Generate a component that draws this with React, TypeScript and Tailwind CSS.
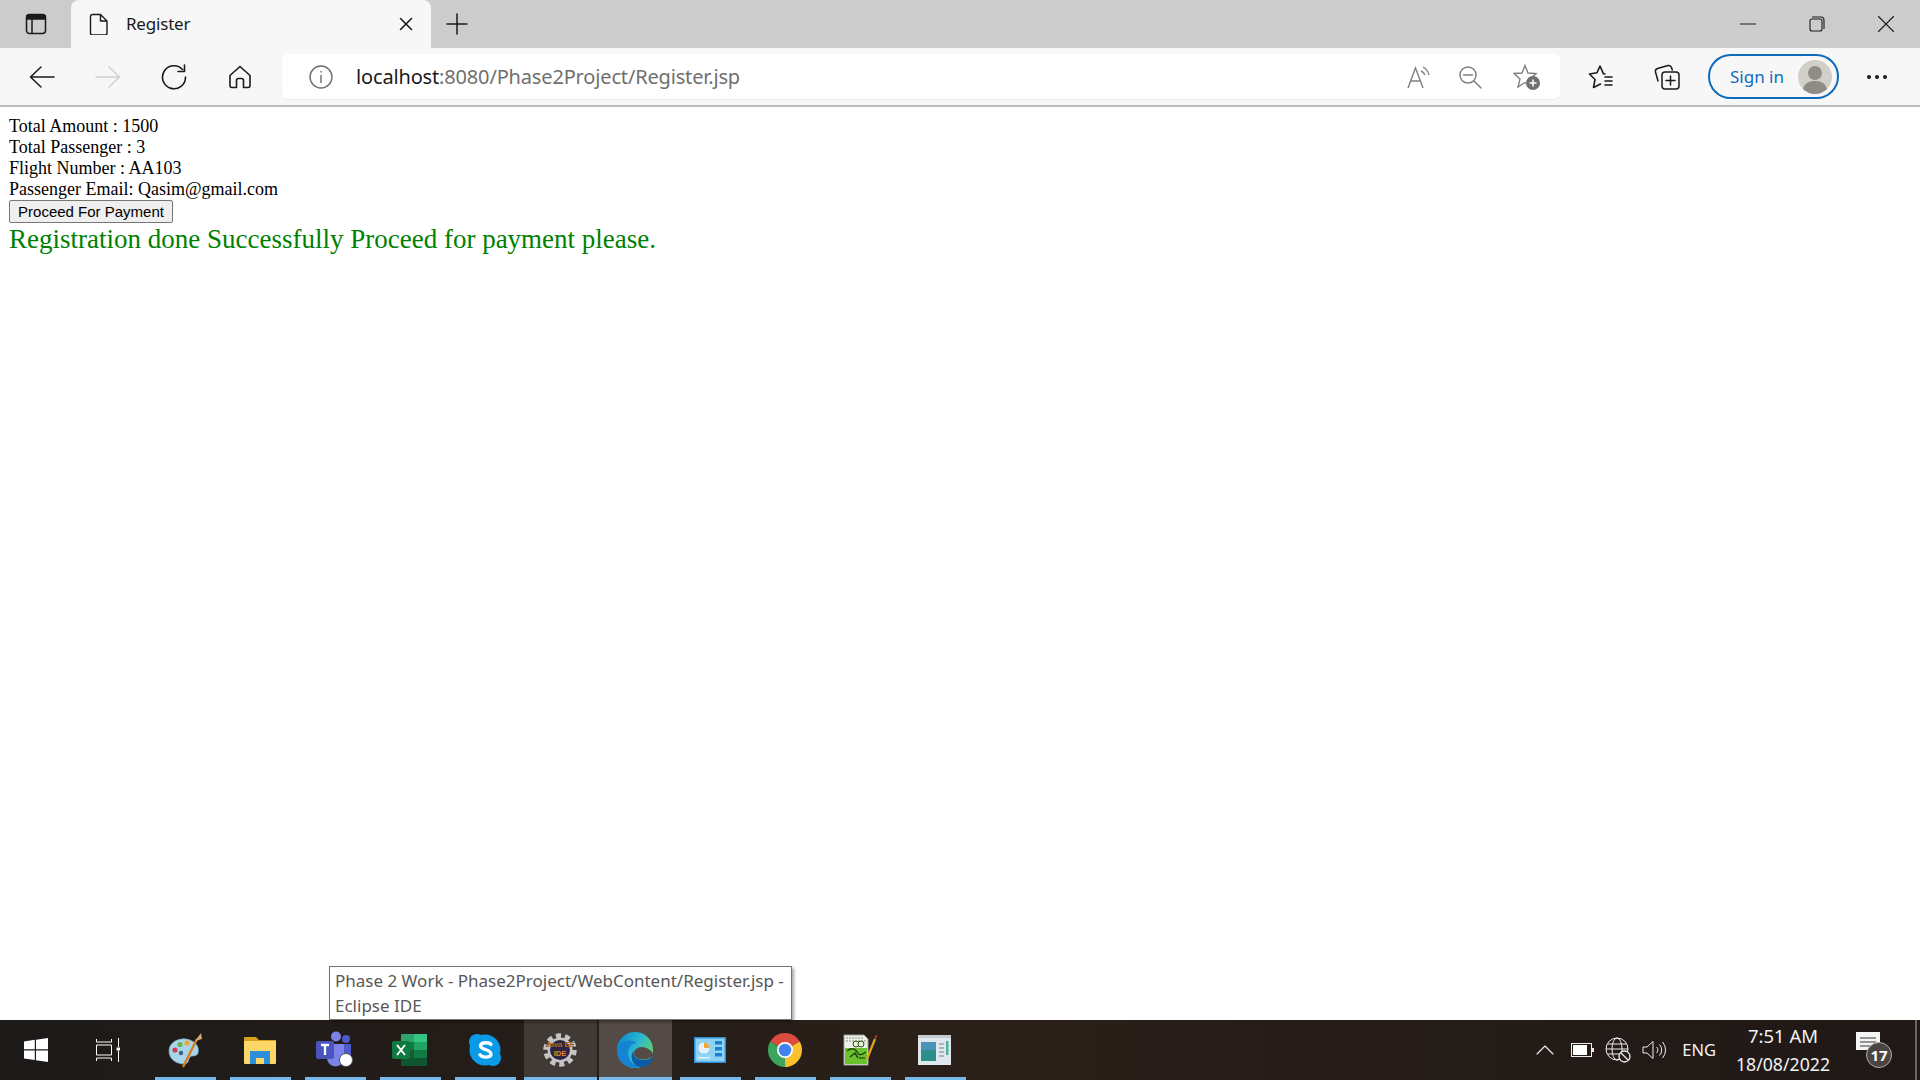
import React from "react";

const Sv = ({ s = 24, children, c = "#1a1a1a", w = 1.5, className = "" }: any) => (
  <svg width={s} height={s} viewBox={`0 0 ${s} ${s}`} fill="none" stroke={c} strokeWidth={w} strokeLinecap="round" strokeLinejoin="round" className={className}>
    {children}
  </svg>
);

const Tool = ({ children, w = "w-[66px]" }: any) => <div className={`${w} h-full flex items-center justify-center shrink-0`}>{children}</div>;

const Back = ({ c = "#1a1a1a" }: any) => (
  <Sv c={c} s={26}><path d="M1.5 13H25M12 3L1.5 13l10.5 10" /></Sv>
);
const Forward = () => (
  <Sv c="#d0d0d0" s={26}><path d="M1 13h23.5M14 3l10.5 10L14 23" /></Sv>
);

const Palette = () => (
  <svg width="38" height="36" viewBox="0 0 38 36">
    <path d="M3 19C3 10 13 6 20 7c8 1 14 7 12 14-1 4-6 2-8 4-2 3-1 7-6 7C10 32 3 27 3 19z" fill="#a9d5ea" stroke="#7ba9c2" strokeWidth="0.7" />
    <circle cx="9" cy="18" r="2.6" fill="#c8434b" />
    <circle cx="14" cy="12.5" r="2.6" fill="#69b34c" />
    <circle cx="21" cy="11" r="2.6" fill="#eaa83a" />
    <circle cx="15" cy="21" r="2.2" fill="#41607a" />
    <path d="M17 35L31 7" stroke="#d97c1e" strokeWidth="2.4" />
    <path d="M29 9l6-8 1 6z" fill="#d6a873" />
  </svg>
);
const Folder = () => (
  <svg width="34" height="28" viewBox="0 0 34 28">
    <path d="M1 2a1 1 0 011-1h11l3 3h17v4H1z" fill="#d8a11b" />
    <path d="M1 5h32v22a1 1 0 01-1 1H2a1 1 0 01-1-1z" fill="#fcd667" />
    <path d="M7 15h20v13h-6v-6h-8v6H7z" fill="#2b8fdc" />
  </svg>
);
const Teams = () => (
  <svg width="38" height="38" viewBox="0 0 38 38">
    <circle cx="20" cy="5.5" r="5" fill="#7b83eb" />
    <circle cx="30" cy="8" r="4" fill="#5059c9" />
    <path d="M24 13h11v11a5 5 0 01-5 5h-6z" fill="#5059c9" />
    <path d="M11 13h17v14a8 8 0 01-17 0z" fill="#7b83eb" />
    <rect x="0" y="10" width="18" height="18" rx="2" fill="#4b53bc" />
    <path d="M5 14h8M9 14v10" stroke="#fff" strokeWidth="2.3" />
    <circle cx="30" cy="29" r="6.5" fill="#fff" stroke="#555" strokeWidth="1" />
  </svg>
);
const Excel = () => (
  <svg width="36" height="32" viewBox="0 0 36 32">
    <path d="M9 1a1 1 0 011-1h24a1 1 0 011 1v7H9z" fill="#2fa36b" />
    <path d="M22 0h12a1 1 0 011 1v7H22z" fill="#33c481" />
    <rect x="9" y="8" width="26" height="8" fill="#107c41" />
    <rect x="22" y="8" width="13" height="8" fill="#21a366" />
    <rect x="9" y="16" width="26" height="8" fill="#185c37" />
    <rect x="22" y="16" width="13" height="8" fill="#107c41" />
    <path d="M9 24h26v7a1 1 0 01-1 1H10a1 1 0 01-1-1z" fill="#0f5530" />
    <rect x="0" y="7" width="18" height="18" rx="2" fill="#0e7a40" />
    <path d="M5 11l8 10M13 11l-8 10" stroke="#fff" strokeWidth="2" />
  </svg>
);
const Skype = () => (
  <svg width="34" height="34" viewBox="0 0 34 34">
    <circle cx="17" cy="17" r="15.5" fill="#0b9ae6" />
    <circle cx="9" cy="9" r="8" fill="#0b9ae6" />
    <circle cx="25" cy="25" r="8" fill="#0b9ae6" />
    <path d="M23 11.5c-1.5-2-9.5-3-10.5 1-.8 4.500 10.500 3.500 10.500 8.500 0 4-8.500 4-11 .8" fill="none" stroke="#fff" strokeWidth="3.300" strokeLinecap="round" />
  </svg>
);
const Eclipse = () => (
  <svg width="34" height="34" viewBox="0 0 34 34">
    <circle cx="17" cy="17" r="14" fill="none" stroke="#c4c4c4" strokeWidth="5.500" strokeDasharray="5 3.800" />
    <circle cx="17" cy="17" r="12.500" fill="#c4c4c4" />
    <circle cx="17" cy="17" r="10" fill="#2b2444" />
    <text x="17" y="14" textAnchor="middle" fontSize="7.500" fontWeight="700" fill="#e8861f" fontFamily="Liberation Sans, sans-serif" stroke="#1a120c" strokeWidth="0.200">Java EE</text>
    <text x="17" y="23" textAnchor="middle" fontSize="7.500" fontWeight="700" fill="#e8861f" fontFamily="Liberation Sans, sans-serif">IDE</text>
  </svg>
);
const Edge = () => (
  <svg width="36" height="36" viewBox="0 0 36 36">
    <defs>
      <linearGradient id="edgeA" x1="0" y1="0.2" x2="1" y2="0.7">
        <stop offset="0" stopColor="#0e86d4" />
        <stop offset="0.5" stopColor="#2ab8cf" />
        <stop offset="1" stopColor="#62d66a" />
      </linearGradient>
    </defs>
    <circle cx="18" cy="18" r="18" fill="url(#edgeA)" />
    <path d="M0 18C2 9 13 6 20 11c-5 0-9 4-9 10 0 7 6 14 14 13-2 1-5 2-7 2C8 36 0 28 0 18z" fill="#1484d2" />
    <path d="M36 22C33 15 21 12 17.500 19c-2 5 2 8.500 9 8.500 4 0 7-1.500 9-3z" fill="#544b47" />
    <path d="M36 24.500c-3 2.500-6 3.500-10 3.500-7 0-11-4-9-10-5 6-2 17 8 17 5 0 9-3 11-10.500z" fill="#0b5aa8" />
  </svg>
);
const Control = () => (
  <svg width="32" height="26" viewBox="0 0 32 26">
    <rect x="0" y="0" width="32" height="26" fill="#2f8fd8" />
    <rect x="1.500" y="1.500" width="29" height="23" fill="#8ed2f4" />
    <circle cx="10" cy="11" r="5.500" fill="#e6f4fb" />
    <path d="M10 11V5.500A5.500 5.500 0 0115.500 11z" fill="#f0a838" />
    <rect x="21" y="4" width="7" height="3.500" fill="#1f7fcf" />
    <rect x="21" y="10" width="7" height="3.500" fill="#1f7fcf" />
    <rect x="21" y="16" width="7" height="3.500" fill="#1f7fcf" />
    <rect x="4" y="20" width="12" height="1.500" fill="#e6f4fb" />
  </svg>
);
const Chrome = () => (
  <svg width="34" height="34" viewBox="0 0 34 34">
    <path d="M17 17L2.300 8.500A17 17 0 0131.700 8.500z" fill="#dd4b3e" />
    <path d="M17 17L31.700 8.500A17 17 0 0117 34z" fill="#fbc02d" />
    <path d="M17 17L17 34A17 17 0 012.300 8.500z" fill="#3ba55c" />
    <circle cx="17" cy="17" r="8" fill="#fff" />
    <circle cx="17" cy="17" r="6.300" fill="#3f83f0" />
  </svg>
);
const Notepad = () => (
  <svg width="34" height="34" viewBox="0 0 34 34">
    <path d="M1 2h20l4 4v26H1z" fill="#eef3ea" stroke="#9a9a9a" strokeWidth="1" />
    <rect x="2" y="15" width="22" height="16" fill="#6cc22d" />
    <path d="M3 5h18M3 8h20" stroke="#8a8a8a" strokeWidth="1.200" strokeDasharray="2 1" />
    <circle cx="13" cy="11" r="3" fill="#e8f0d8" stroke="#2c4a14" strokeWidth="1" />
    <circle cx="18" cy="11" r="3" fill="#e8f0d8" stroke="#2c4a14" strokeWidth="1" />
    <path d="M4 18c4-3 8-3 10 1s5 3 9 0M7 24l5-4 3 5" stroke="#23430f" strokeWidth="1.500" fill="none" />
    <path d="M16 25h6" stroke="#23430f" strokeWidth="1.200" />
    <path d="M24 26L32 6" stroke="#e0a51e" strokeWidth="2.200" />
    <path d="M32 6l1.500-4" stroke="#a8322a" strokeWidth="2" />
  </svg>
);
const Win = () => (
  <svg width="34" height="30" viewBox="0 0 34 30">
    <rect x="0" y="0" width="33" height="30" fill="#dfe8ec" />
    <rect x="0" y="0" width="33" height="3" fill="#c3cdd2" />
    <rect x="3" y="7" width="15" height="19" fill="#2c8f8a" />
    <rect x="3" y="7" width="15" height="8" fill="#4a94b8" />
    <path d="M21 9h5M21 13h5M21 17h5M21 21h5" stroke="#9aa5ab" strokeWidth="1.500" />
    <rect x="28" y="6" width="2.500" height="14" fill="#4db39a" />
  </svg>
);

const TaskApp = ({ children, bg = "", w = "w-[61px]", ml = "ml-[14px]" }: any) => (
  <div className={`${w} ${ml} ${bg} h-full shrink-0 flex items-center justify-center relative pr-[2px]`}>
    {children}
    <span className="absolute left-0 right-0 bottom-0 h-[3px] bg-[#76b9ed]" />
  </div>
);

export default function App() {
  return (
    <div className="w-[1920px] h-[1080px] flex flex-col overflow-hidden relative bg-white" style={{ fontFamily: '"Noto Sans", sans-serif' }}>
      {/* tab strip */}
      <div className="h-[48px] bg-[#cccccc] flex shrink-0">
        <div className="w-[71px] flex items-center justify-center shrink-0 -ml-[1px]">
          <Sv s={24} w={1.5}>
            <rect x="3.500" y="2.500" width="19" height="19" rx="3" />
            <path d="M4 3.500h18V7H4z" fill="#1a1a1a" />
            <path d="M9 7v14" />
          </Sv>
        </div>
        <div className="w-[360px] h-[48px] bg-[#f7f7f7] rounded-t-[8px] flex items-center shrink-0 ml-[1px]">
          <div className="ml-[17px] w-[20px]">
            <Sv s={22} w={1.4}><path d="M2.500 3.500a2 2 0 012-2h8l6.500 6.500v12a2 2 0 01-2 2h-12.500a2 2 0 01-2-2zM12.500 1.500v6.500h6.500" /></Sv>
          </div>
          <span className="ml-[18px] text-[17px] tracking-[-0.2px] text-[#1a1a1a] flex-1">Register</span>
          <div className="mr-[18px]">
            <Sv s={14} w={1.6}><path d="M1.500 1.500l11 11M12.500 1.500l-11 11" /></Sv>
          </div>
        </div>
        <div className="ml-[15px] flex items-center">
          <Sv s={22} w={1.5}><path d="M11 1v20M1 11h20" /></Sv>
        </div>
        <div className="flex-1" />
        <div className="flex items-center h-full">
          <div className="w-[69px] flex justify-center"><Sv s={16} w={1.1}><path d="M0 8h16" /></Sv></div>
          <div className="w-[69px] flex justify-center">
            <Sv s={16} w={1.1}><rect x="1" y="3" width="12" height="12" rx="2" /><path d="M3.500 1h8.500a3 3 0 013 3v8.500" /></Sv>
          </div>
          <div className="w-[69px] flex justify-center"><Sv s={16} w={1.1}><path d="M0.500 0.500l15 15M15.500 0.500l-15 15" /></Sv></div>
        </div>
      </div>

      {/* toolbar */}
      <div className="h-[59px] bg-[#f7f7f7] border-b-[2px] border-[#bdbdbd] flex items-start shrink-0 pl-[9px]">
        <div className="h-[57px] flex">
          <Tool><Back /></Tool>
          <Tool><Forward /></Tool>
          <Tool>
            <Sv s={26} w={1.6}><path d="M21.500 5.500A11.500 11.500 0 1024.500 13M23.500 1v6.500H17" /></Sv>
          </Tool>
          <Tool>
            <Sv s={24} w={1.6}><path d="M12 1.500L2 10.500v10a2 2 0 002 2h4.500v-7a2 2 0 012-2h3a2 2 0 012 2v7H20a2 2 0 002-2v-10z" /></Sv>
          </Tool>
        </div>
        <div className="ml-[9px] mt-[6px] w-[1278px] h-[45px] bg-white rounded-[6px] flex items-center shrink-0 shadow-[0_1px_2px_rgba(0,0,0,0.06)]">
          <div className="ml-[27px] w-[24px]">
            <Sv s={24} c="#6d6d6d" w={1.4}>
              <circle cx="12" cy="12" r="11" />
              <path d="M12 10.500v7M12 6.500v.6" />
            </Sv>
          </div>
          <div className="ml-[23px] text-[20px] tracking-[-0.16px] flex-1 text-[#6f6f6f]">
            <span className="text-[#1a1a1a]">localhost</span>:8080/Phase2Project/Register.jsp
          </div>
          <div className="w-[24px] mr-[27px]">
            <svg width="26" height="24" viewBox="0 0 26 24" fill="none" stroke="#808080" strokeWidth="1.400">
              <path d="M1 23L8.500 3l7.500 20M4 16h10" />
              <path d="M14 6a7 7 0 014 4M16 2a12 12 0 016 8" />
            </svg>
          </div>
          <div className="w-[24px] mr-[31px]">
            <Sv s={24} c="#808080" w={1.500}><circle cx="10" cy="10" r="8" /><path d="M5.500 10h9M16 16l7 7" /></Sv>
          </div>
          <div className="w-[26px] mr-[21px]">
            <svg width="28" height="26" viewBox="0 0 28 26" fill="none" stroke="#808080" strokeWidth="1.400">
              <path d="M12 1.500l3 7.500 8 .5-6 5.500 2 8-7-4.500-7 4.500 2-8-6-5.500 8-.5z" />
              <circle cx="20" cy="19" r="7" fill="#6f6f6f" stroke="none" />
              <path d="M20 15.500v7M16.500 19h7" stroke="#fff" strokeWidth="1.500" />
            </svg>
          </div>
        </div>
        <div className="h-[57px] flex items-center flex-1">
          <div className="ml-[28px] w-[30px]">
            <Sv s={26} w={1.600}>
              <path d="M17 10l-1.500-.2L12 2 9 8.800 1.500 10l5.500 5.500-1.500 8 7-3.500" />
              <path d="M17 13h7M17 17h7M17 21h7" />
            </Sv>
          </div>
          <div className="ml-[36px] w-[28px]">
            <Sv s={26} w={1.500}>
              <rect x="8" y="8" width="17" height="17" rx="3" />
              <path d="M16.500 12v9M12 16.500h9" />
              <path d="M4 17L1.500 8a3 3 0 012-3.500L14 1.500a3 3 0 013.500 2l.8 2.500" />
            </Sv>
          </div>
          <div className="ml-[26px] w-[131px] h-[45px] border-[2px] border-[#0f6cbd] rounded-full flex items-center justify-between pl-[20px] pr-[5px] bg-[#f7f7f7]">
            <span className="text-[17px] text-[#0f6cbd]">Sign in</span>
            <svg width="34" height="34" viewBox="0 0 34 34">
              <circle cx="17" cy="17" r="17" fill="#d2cfc9" />
              <circle cx="17" cy="13" r="7" fill="#8f8b86" />
              <path d="M5 29c2-7 7-8 12-8s10 1 12 8a17 17 0 01-24 0z" fill="#8f8b86" />
            </svg>
          </div>
          <div className="ml-[28px] flex gap-[4px]">
            <span className="w-[4px] h-[4px] rounded-full bg-[#1a1a1a]" />
            <span className="w-[4px] h-[4px] rounded-full bg-[#1a1a1a]" />
            <span className="w-[4px] h-[4px] rounded-full bg-[#1a1a1a]" />
          </div>
        </div>
      </div>

      {/* page */}
      <main className="flex-1 pt-[9px] pl-[9px] text-black" style={{ fontFamily: '"Liberation Serif", serif' }}>
        <div className="text-[18px] leading-[21px]">Total Amount : 1500</div>
        <div className="text-[18px] leading-[21px]">Total Passenger : 3</div>
        <div className="text-[18px] leading-[21px]">Flight Number : AA103</div>
        <div className="text-[18px] leading-[21px]">Passenger Email: Qasim@gmail.com</div>
        <button className="block w-[164px] h-[23px] bg-[#efefef] border border-[#767676] rounded-[2px] text-[15px] leading-[20px] text-black" style={{ fontFamily: '"Liberation Sans", sans-serif' }}>
          Proceed For Payment
        </button>
        <div className="text-[27px] leading-[30px] mt-[1px] text-[#008000]">Registration done Successfully Proceed for payment please.</div>
      </main>

      {/* tooltip */}
      <div className="absolute left-[329px] top-[966px] w-[463px] h-[54px] bg-white border border-[#767676] shadow-[2px_2px_3px_rgba(0,0,0,0.35)] pl-[5px] pt-[1px] text-[17px] leading-[25px] text-[#575757] z-10">
        Phase 2 Work - Phase2Project/WebContent/Register.jsp -<br />Eclipse IDE
      </div>

      {/* taskbar */}
      <div className="h-[60px] shrink-0 flex bg-gradient-to-r from-[#1c1a19] via-[#2b2019] to-[#1f1816] text-[#f2f2f2]">
        <div className="w-[72px] shrink-0 flex items-center justify-center">
          <svg width="24" height="24" viewBox="0 0 24 24" fill="#fff">
            <path d="M0 3.400L10.800 1.800v9.500H0zM12 1.700L24 0v11.300H12zM0 12.500h10.800V22L0 20.500zM12 12.500h12V24l-12-1.700z" />
          </svg>
        </div>
        <div className="w-[72px] shrink-0 flex items-center justify-center">
          <svg width="24" height="24" viewBox="0 0 24 24" fill="none" stroke="#fff" strokeWidth="1">
            <path d="M0.500 1v3h15V1M0.500 23v-3h15v3M.5 7h15v10H.5zM22.500 0v9M22.500 13v11" />
            <rect x="20.500" y="9.500" width="3.500" height="3" fill="#fff" stroke="none" />
          </svg>
        </div>
        <div className="flex h-full -ml-[1px]">
          <TaskApp ml="ml-[12px]"><Palette /></TaskApp>
          <TaskApp><Folder /></TaskApp>
          <TaskApp><Teams /></TaskApp>
          <TaskApp><Excel /></TaskApp>
          <TaskApp><Skype /></TaskApp>
          <TaskApp ml="ml-[8px]" w="w-[73px]" bg="bg-[#403936]"><Eclipse /></TaskApp>
          <TaskApp ml="ml-[2px]" w="w-[73px]" bg="bg-[#544b47]"><Edge /></TaskApp>
          <TaskApp ml="ml-[8px]"><Control /></TaskApp>
          <TaskApp><Chrome /></TaskApp>
          <TaskApp><Notepad /></TaskApp>
          <TaskApp><Win /></TaskApp>
        </div>
        <div className="flex-1" />
        <div className="flex items-center h-full">
          <Sv s={18} c="#eeeeee" w={1.100}><path d="M1 13l8-8 8 8" /></Sv>
          <div className="ml-[17px]">
            <svg width="24" height="14" viewBox="0 0 24 14"><rect x="0.500" y="0.500" width="20" height="13" fill="none" stroke="#eee" /><rect x="2" y="2" width="14" height="10" fill="#fff" /><rect x="21" y="5" width="2" height="4" fill="#eee" /></svg>
          </div>
          <div className="ml-[10px]">
            <svg width="26" height="26" viewBox="0 0 26 26" fill="none" stroke="#eee" strokeWidth="1">
              <circle cx="12" cy="12" r="11" />
              <ellipse cx="12" cy="12" rx="5" ry="11" />
              <path d="M1 12h22M2.500 7h19M2.500 17h19" />
              <circle cx="19.500" cy="19.500" r="5.500" fill="#241c18" strokeWidth="1.300" />
              <path d="M16 16l7 7" strokeWidth="1.300" />
            </svg>
          </div>
          <div className="ml-[11px]">
            <svg width="24" height="20" viewBox="0 0 24 20" fill="none" stroke="#eee" strokeWidth="1">
              <path d="M1 7h4l6-5.500v17L5 13H1z" />
              <path d="M14.500 7a4 4 0 010 6M17.500 4.500a8 8 0 010 11M20.500 2a12 12 0 010 16" />
            </svg>
          </div>
          <span className="ml-[16px] text-[16.500px]">ENG</span>
          <div className="ml-[17px] w-[100px] text-center text-[17.700px] leading-[28px] flex flex-col">
            <span className="text-[18.500px]">7:51 AM</span>
            <span>18/08/2022</span>
          </div>
          <div className="ml-[23px] mr-[23px] relative w-[36px] h-[36px]">
            <svg width="24" height="24" viewBox="0 0 24 24" className="absolute top-0 left-0">
              <path d="M0 0h24v18h-6l-6 5-1-5H0z" fill="#f5f5f5" />
              <path d="M4 6h16M4 10h16M4 14h10" stroke="#333" strokeWidth="1" />
            </svg>
            <span className="absolute left-[10px] top-[10px] w-[26px] h-[26px] rounded-full bg-[#4a4542] border border-[#aaa] text-white text-[15px] font-bold flex items-center justify-center leading-none">17</span>
          </div>
          <div className="w-[2px] h-full bg-[#6b6662]" />
          <div className="w-[3px]" />
        </div>
      </div>
    </div>
  );
}
